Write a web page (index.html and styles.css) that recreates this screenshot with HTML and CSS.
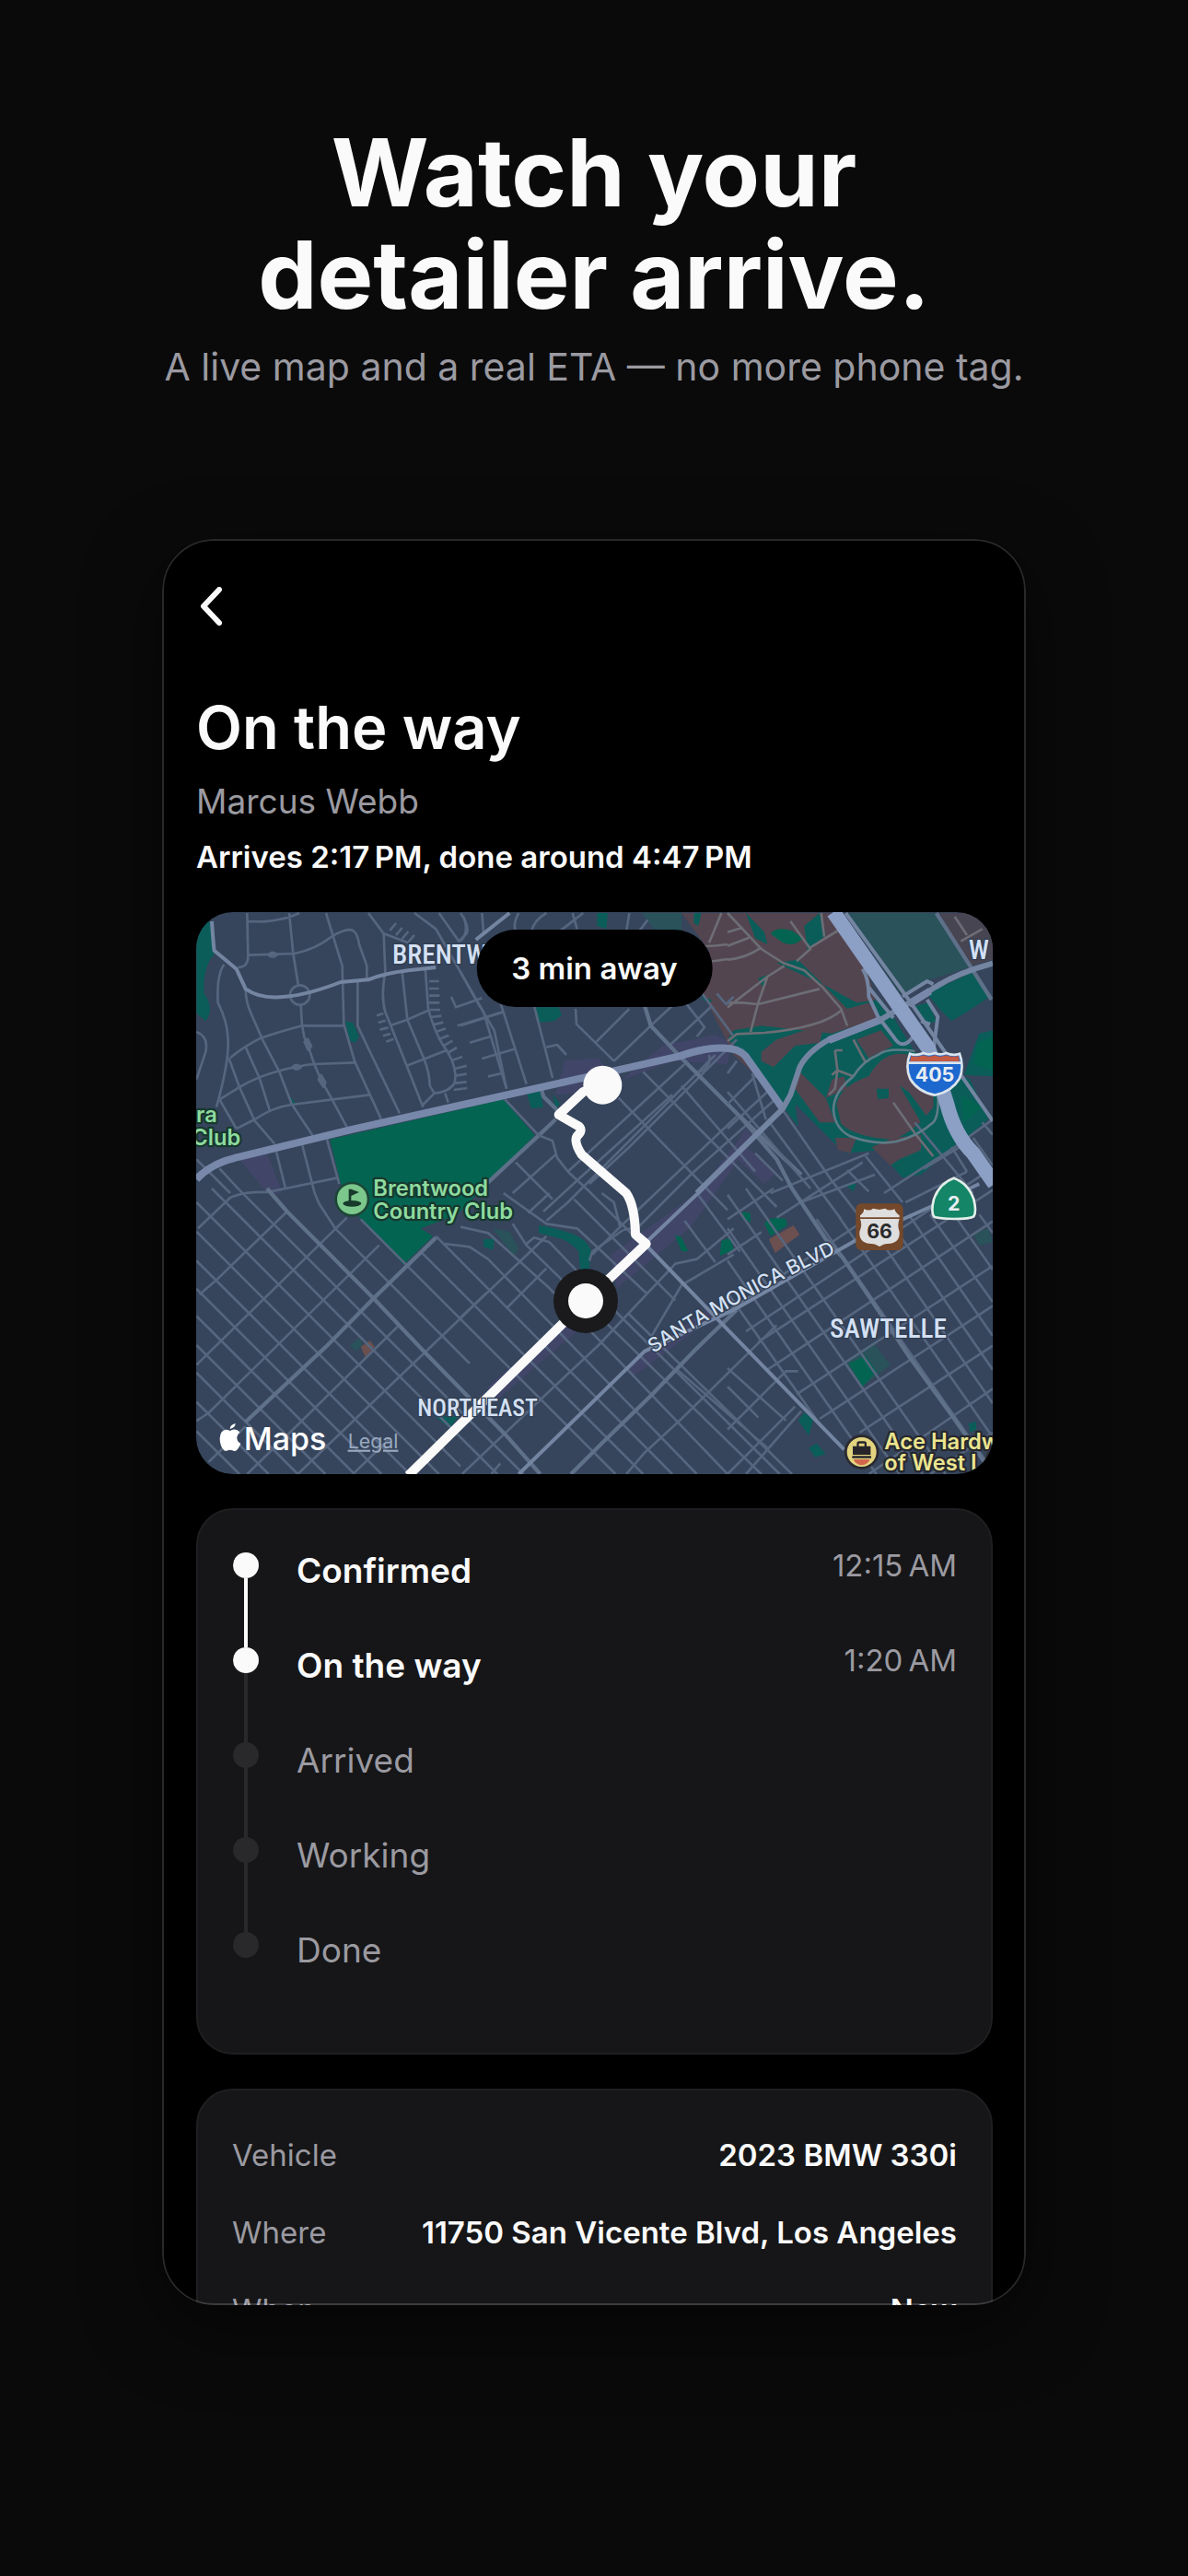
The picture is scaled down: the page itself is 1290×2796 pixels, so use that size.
FILE: index.html
```html
<!DOCTYPE html>
<html lang="en">

<head>
    <meta charset="UTF-8">
    <meta name="viewport" content="width=device-width, initial-scale=1.0">
    <title>Watch your detailer arrive</title>
    <link rel="stylesheet" href="styles.css">
</head>

<body>
    <header class="hero">
        <h1>Watch your<br>detailer arrive.</h1>
        <p>A live map and a real ETA — no more phone tag.</p>
    </header>

    <main class="phone">
        <button class="back" type="button" aria-label="Back">
            <svg viewBox="0 0 24 42" width="24" height="42">
                <path d="M21 3 L4 21 L21 39" />
            </svg>
        </button>

        <h2>On the way</h2>
        <p class="detailer">Marcus Webb</p>
        <p class="eta">Arrives 2:17&#8239;PM, done around 4:47&#8239;PM</p>

        <section class="map">
            <svg class="map-art" viewBox="9 15 2595 1830">
                <!-- Parks and land use -->
                <g class="land">
                    <path class="park" d="M445 755 L1010 625 L1112 742 L960 895 L860 1000 L740 1045 L780 1070 L685 1163 L545 1015 L480 900 Z" />
                    <path class="teal" d="M10 60 L55 45 L70 150 Q30 190 35 280 Q70 330 40 370 L10 345 Z" />
                    <path class="teal" d="M495 370 L520 375 L540 420 L528 440 L510 435 Z M315 615 L335 638 L318 640 Z" />
                    <path class="plum" d="M150 820 L240 800 L290 930 L240 930 Z M1210 500 L1320 490 L1340 520 L1290 600 L1180 610 Z M1530 450 L1700 415 L1750 440 L1740 510 L1560 500 L1400 560 L1430 530 Z" />
                    <path class="plum" d="M1360 1130 L1640 930 L1760 780 L1800 720 L1820 740 L1750 860 L1620 1040 L1380 1240 Z M1740 790 L1790 770 L1900 860 L1860 900 Z M1410 1500 L1700 1290 L1720 1310 L1430 1530 Z M960 1560 L1240 1320 L1260 1370 L970 1620 Z M10 1770 L60 1840 L10 1800 Z" />
                    <path class="teal" d="M1115 325 L1190 325 L1200 350 L1175 370 L1125 375 Z M1085 600 L1130 595 L1140 650 L1100 655 Z M1170 610 L1195 640 L1180 655 Z M1315 18 L1350 18 L1345 70 L1315 60 Z" />
                    <path class="teal" d="M1125 1035 Q1190 1045 1240 1065 Q1280 1080 1295 1115 L1290 1180 L1260 1180 L1255 1120 Q1220 1080 1180 1075 L1125 1060 Z M945 1080 L980 1080 L975 1115 L945 1105 Z" />
                    <path class="forest" d="M975 1045 L1030 1055 L1060 1110 L1045 1135 Z M1460 18 L1590 18 L1590 80 L1500 70 Z" />
                    <path class="park" d="M1568 1065 L1590 1075 L1612 1120 L1590 1120 Z M1720 1085 L1750 1075 L1760 1115 L1715 1135 Z" />
                    <path class="brown" d="M1590 18 L2085 18 L2200 220 L2235 360 L2080 430 L1990 480 L1950 560 L1890 600 L1760 480 L1660 280 L1680 140 Z" />
                    <path class="teal" d="M1800 18 L1860 80 L1870 120 L1830 100 Z M1990 60 L2040 18 L2060 90 L2000 140 Z M1630 18 L1655 18 L1645 60 L1630 50 Z M1650 290 L1690 300 L1680 315 Z M1840 230 L1870 220 L1855 260 Z" />
                    <path class="park" d="M1880 85 Q1900 60 1950 75 L1985 100 Q1960 130 1920 115 Z" />
                    <path class="teal" d="M1900 180 L1970 170 L2050 250 L2130 330 L2200 310 L2235 360 L2080 410 L1850 385 L1760 400 L1740 430 L1790 470 L1930 660 L1970 715 L1960 640 L2080 760 L2130 800 L2230 790 L2310 880 L2370 870 L2590 690 L2530 560 L2350 470 L2270 340 L2240 300 L2160 310 L2070 260 Z" />
                    <path class="brown" d="M1850 470 L1900 430 L1990 400 L2050 400 L2040 440 L1960 450 L1890 520 L1850 500 Z M2160 430 L2240 400 L2280 450 L2200 490 Z" />
                    <path class="brown" d="M1970 530 L2060 620 L2090 700 L2040 700 L1960 590 Z M2080 560 L2120 550 L2130 590 L2060 620 Z" />
                    <path class="brown" d="M2095 640 Q2110 580 2200 550 Q2250 460 2330 480 Q2420 560 2410 650 Q2350 730 2280 755 Q2160 750 2110 705 Z" />
                    <path class="brown" d="M2210 780 L2280 750 L2370 740 L2370 790 L2300 820 L2270 840 Z M2090 750 L2160 750 L2140 800 L2100 790 Z" />
                    <path class="teal" d="M2300 580 L2330 600 L2390 680 L2370 700 Z M2225 590 L2265 590 L2265 620 L2230 625 Z" />
                    <path class="forest" d="M2130 18 L2420 18 L2530 195 L2380 240 L2310 290 L2150 60 Z" />
                    <path class="teal" d="M2390 280 L2540 210 L2595 290 L2520 340 L2470 370 L2430 330 Z M2560 410 L2604 400 V550 L2510 545 Z M2350 320 L2395 310 L2420 370 L2390 380 Z" />
                    <path class="brown soft" d="M2430 18 L2604 18 V170 L2530 190 Z" />
                    <path class="park" d="M2555 440 L2604 420 V530 L2540 510 Z M2500 610 L2570 650 L2510 700 Z" />
                    <path class="park" d="M1860 1030 Q1880 1000 1930 1015 L1935 1035 L1880 1070 Z M1790 990 L1815 995 L1815 1025 L1785 1015 Z" />
                    <path class="clay" d="M1875 1080 L1955 1035 L1975 1065 L1895 1125 Z M545 1430 L575 1410 L590 1430 L560 1465 Z" />
                    <path class="forest" d="M2120 1480 L2215 1415 L2270 1490 L2180 1560 Z M510 1425 L545 1400 L550 1425 L530 1445 Z M2540 1060 L2590 1045 L2604 1090 L2560 1100 Z" />
                    <path class="park" d="M2135 1485 L2190 1460 L2225 1510 L2180 1560 Z" />
                    <path class="teal" d="M1970 1670 L1990 1645 L2020 1665 L2005 1720 Z M2005 1760 L2030 1745 L2060 1780 L2025 1790 Z M2525 1680 L2550 1675 L2550 1700 L2530 1710 Z M790 1660 L865 1655 L835 1695 Z M2120 900 L2160 900 L2150 925 Z" />
                </g>

                <!-- Streets, west side -->
                <g class="street">
                    <path d="M175 18 L178 155 Q180 195 145 195 M175 45 L230 46 Q300 40 345 18 M312 18 L325 150 L342 255 M432 18 L485 190 L490 380 L525 500 L612 690" />
                    <path d="M180 155 L330 150 Q400 135 450 95 Q500 65 520 75 Q535 85 540 120 L565 190 V230" />
                    <circle cx="347" cy="285" r="32" />
                    <path d="M350 318 L354 385 L362 425 L372 445 L393 508 L415 560 L452 625 L500 715 M362 438 l10 -10 l12 24 l-10 12 z M408 560 l8 -14 l14 24 l-6 14 z M322 520 q14 -14 28 0 q-14 14 -28 0 M244 154 q14 -14 28 0 q-14 14 -28 0" />
                    <path d="M120 490 Q160 455 220 425 Q280 405 354 385 H490 M85 625 L150 585 Q210 550 280 532 Q340 515 393 510 L525 505 M140 720 L200 690 Q260 650 320 642 L452 625 L575 610" />
                    <path d="M170 265 Q170 310 190 350 L225 430 L280 535 L320 640 L388 742 M100 185 Q75 220 80 310 Q110 370 112 420 Q120 490 75 650" />
                    <path d="M115 490 L150 585 L200 695 L265 770 M170 455 L215 555 L250 665 M85 625 L140 720 M535 240 V385 L580 480 L672 670" />
                    <path d="M570 18 L620 85 L625 210 Q610 290 625 340 L695 515 L748 650 M680 210 L697 365 L750 490 Q770 540 770 580 L785 605 L745 645" />
                    <path d="M755 195 L765 330 Q790 420 825 465 Q860 520 852 570 Q835 600 785 605 M825 465 L695 515 M640 385 L697 365 L765 335 M820 605 L830 635" />
                    <path d="M768 240h32 M768 264h32 M768 287h34 M768 310h34 M770 333h34 M774 357l34 -4 M780 382l34 -8 M788 406l34 -12 M798 430l34 -14 M812 452l32 -18 M828 474l30 -18 M842 498l34 -12 M852 525l38 -10 M854 548l36 -6 M854 572l36 -4 M848 594l44 -6" />
                    <path d="M620 85 L700 115 M640 75l20 -24 M660 90l20 -24 M680 102l20 -24 M700 112l20 -22 M597 352l22 -7 M602 375l24 -7 M607 398l28 -7 M618 418l24 -7 M628 437l24 -9" />
                    <path d="M720 18 L790 70 L870 210 L920 300 L980 400 L1020 590 M800 18 L865 110 L890 85 Q900 60 870 18 M840 290 L855 325 L940 295 M860 385 L1010 340 M900 440 L968 420 M940 492 L1050 460 M960 550 L1005 540" />
                    <path d="M270 795 L300 915 M355 775 L395 930 L410 965 L462 1045 L900 1485 M435 755 L475 900 M300 915 L470 880 M85 850 L150 920 M10 820 L120 930 M10 405 Q50 420 40 470 L10 560" />
                </g>

                <!-- Streets, south-west grid -->
                <g class="street">
                    <path d="M15 1045 L120 945 Q160 925 240 927 L300 915 M20 1260 L75 1213 L305 990 M10 1490 L40 1460 L500 1010 M10 1672 L48 1647 L605 1100 M50 1805 L170 1690" />
                    <path d="M175 1845 L360 1665 L665 1365 M340 1845 L855 1352 L1150 1070 M520 1845 L640 1728 M870 1335 L955 1255 M1020 1305 L1150 1175" />
                    <path d="M10 960 L870 1820 M10 1055 L800 1845 M10 1150 L705 1845 M10 1242 L613 1845 M10 1330 L525 1845 M10 1425 L430 1845 M10 1515 L340 1845 M10 1610 L245 1845 M10 1705 L150 1845 M10 1800 L55 1845" />
                    <path d="M60 915 L990 1845 M150 920 L1075 1845 M545 1015 L1375 1845 M740 1120 L1465 1845 M790 1070 L1560 1845 M820 1095 L900 1105 L960 1145 L1640 1845" />
                    <path d="M870 1040 L960 1060 L1160 1240 L1740 1845 M1040 1030 L1085 1100 L1850 1845 M1085 1095 L1110 1075 L1160 1090 L1380 1320 L1910 1845" />
                    <path d="M875 1845 L1170 1565 L1320 1425 L1570 1160 L1640 1145 L1760 1045 M970 1845 L1000 1810 M1410 1845 L1470 1775 L1590 1665 L1900 1360 M1740 1845 L1960 1625" />
                    <path d="M1490 1400 L1590 1230 L1760 1130 M1415 1320 L1950 1845 M1570 1500 L1870 1760" />
                </g>
                <g class="street wide">
                    <path d="M240 915 L305 990 L410 1095 L587 1273 L755 1450 L1015 1715 L1130 1845" />
                    <path d="M170 1675 L330 1525 L432 1430 L587 1273 L790 1075 M960 895 L1125 742 L1180 690 M1230 1845 L1330 1745 L1490 1590 L1630 1445 L1770 1310" />
                </g>

                <!-- Streets, middle -->
                <g class="street">
                    <path d="M870 210 L945 340 L1020 590 M1000 310 L1085 575 M1110 320 L1170 555 M1150 455 L1185 447 L1215 480 M1245 330 L1248 380 L1370 500 M1310 440 L1420 330 M1370 500 L1490 385 L1560 320" />
                    <path d="M880 30 Q900 80 870 110 M940 18 L945 80 M1060 18 Q1040 50 1050 80 M1100 80 Q1110 40 1150 18 M1190 80 L1270 18 M1235 18 L1250 70 M1420 18 L1410 80 M1480 40 L1450 80 M870 385 L1010 340" />
                    <path d="M1015 625 L1125 742 L1170 760 L1185 815 L1220 860 L1290 925 L1440 1075 M1050 830 L1170 950 M1040 930 L1180 805 M1220 860 L1600 510 M1140 990 L1260 880 L1560 610" />
                    <path d="M1090 995 L1160 930 M1150 1020 L1220 960 L1700 480 M1290 900 L1420 780 L1770 430 M1390 1040 L1770 680 M1300 1130 L1390 1040 L1370 960 L1330 930 M1400 1050 L1450 1040 L1620 870 L1900 620" />
                    <path d="M1385 620 L1740 985 M1465 535 L1900 975 M1590 580 L1830 860 M1550 450 L1690 320 M1680 480 Q1690 520 1640 540 M1600 1020 L1700 1155 M1640 930 L1780 1120" />
                    <path d="M1010 930 L1150 1030 L1250 1045 L1480 1260 M1290 1150 L1300 1120 L1400 1050 M1240 950 L1570 1280" />
                </g>
                <g class="street wide">
                    <path d="M1470 320 L1490 385 L1580 480 L1780 680 L1980 870 M1130 575 L1140 615 L1185 660" />
                </g>

                <!-- Streets, Sawtelle grid -->
                <g class="street">
                    <path d="M1740 1015 L1890 915 M1740 1130 L1850 1057 M1740 1315 L2230 990 M1800 1380 L2604 848 M1840 1415 L2604 920 M1870 1505 L2604 1022 M1965 1585 L2604 1167" />
                    <path d="M2040 1665 L2604 1297 M2170 1710 L2604 1427 M2200 1845 L2604 1567 M2400 1845 L2604 1710" />
                    <path d="M1740 1255 L2040 1682 M1740 1150 L2225 1845 M1740 1045 L2300 1845 M1740 935 L2375 1845 M1800 915 L2450 1845 M2030 1015 L2604 1835 M2105 1010 L2604 1725" />
                    <path d="M2180 1000 L2604 1615 M2310 1080 L2604 1505 M2330 1000 L2604 1395 M2400 1000 L2604 1285 M2450 960 L2604 1180 M2560 1000 L2604 1060" />
                    <path d="M1740 1560 L1840 1660 M1740 1500 L1930 1670 M1740 1700 L1930 1510 L1970 1510 M1800 1845 L1980 1640" />
                    <path d="M1740 640 L1840 540 M1740 720 L1870 600 M1820 540 L1865 690 M1740 600 L2010 915 M1740 540 L1770 500 M1870 690 L2110 1015 M1920 660 L2080 890 L2180 1020" />
                    <path d="M1880 930 L2200 800 M1900 1010 L2180 830 M1980 960 L2220 870 M2130 855 L2200 925 M2190 810 L2310 960 M2250 930 L2480 780 L2604 690 M2380 850 L2530 760 M2320 960 L2520 860" />
                    <path d="M2350 700 L2540 930 M2470 780 L2520 860 M2570 700 L2604 740 M2540 750 L2604 840 M1830 800 L1920 890" />
                </g>
                <g class="street wide">
                    <path d="M1780 680 L1900 820 L1950 915 L2060 1080 L2115 1140 L2200 1265 L2330 1460 L2475 1660 L2604 1845" />
                    <path d="M2420 18 L2530 190 L2600 300" />
                </g>

                <!-- Cemetery and campus paths -->
                <g class="lane">
                    <path d="M1740 18 L1850 135 L1920 180 L1990 205 L2050 260 L2110 330 L2130 385 M1740 80 L1790 65 M1740 125 L1810 98 M1740 170 Q1800 165 1850 130 M1600 125 Q1680 130 1740 120 M1610 175 Q1680 180 1740 168 M1720 18 L1680 115" />
                    <path d="M1740 325 L1870 225 L1925 190 M1740 310 H1790 L1840 315 L2040 265 M1870 225 L1840 310 L1815 405 M1945 45 L2010 135 L1965 175 M2010 130 L2100 75 M2045 18 L2055 95" />
                    <path d="M1740 435 L1770 412 L1860 408 Q2050 390 2110 335 M2150 430 L2190 505 M2090 465 h25 M2090 465 L2098 530 L2090 590 L2070 610 M2080 545 L2098 530 L2150 550 M2280 635 L2350 735 L2410 810 M2480 30 L2520 90 M2500 110 L2570 70" />
                    <path class="cool" d="M2150 550 Q2180 500 2230 480 Q2260 455 2350 468 M2150 550 Q2085 600 2085 660 Q2090 720 2140 745 Q2220 775 2290 762 Q2360 745 2410 700 Q2430 680 2425 600" />
                </g>
                <path class="street" d="M1650 270 L1760 420 M1580 280 L1665 390 L1640 420 M1705 280 L1735 315 L1760 290" />

                <!-- Main roads -->
                <path class="road" d="M60 45 Q65 120 68 140 L140 200 L170 265 Q220 300 300 290 Q370 285 480 243 L570 235 Q620 215 700 205 L790 195 M920 105 L1030 18" />
                <path class="road" d="M1060 1845 L1470 1445 L1760 1310 L2150 1088 L2400 975 L2560 900 M1470 1095 L1770 1405 L2120 1765 M1470 1095 L1660 915" />
                <path class="avenue" d="M10 885 Q60 830 150 812 L520 722 L1290 550 L1580 485 Q1680 450 1750 460 Q1790 465 1810 500 L1920 655" />
                <path class="road thick" d="M1640 930 L1920 655 L1945 610 L1975 520 Q2000 470 2070 430 L2240 365 L2400 270 Q2480 215 2604 182" />
                <path class="avenue" d="M2070 432 L2240 365 M2330 315 L2400 272" />
                <path class="road" d="M2125 18 L2330 300 L2604 695" />
                <path class="road" d="M2180 200 Q2200 230 2200 290 L2230 355 L2280 420 Q2310 470 2345 420 M2200 260 L2280 360 M2310 290 L2390 240 L2410 250 M2390 300 L2425 355 L2410 470 M2370 370 L2400 380" />
                <path class="freeway" d="M2085 15 L2395 460 Q2430 560 2455 640 Q2480 740 2540 800 L2610 900" />

                <!-- Route -->
                <path class="route" d="M1333 578 L1270 600 L1190 675 L1255 712 Q1270 725 1252 742 Q1236 760 1265 805 L1410 930 Q1438 970 1440 1065 L1475 1095 L1278 1281 L700 1850" />
                <circle class="stop" cx="1333" cy="578" r="63" />
                <circle class="ring" cx="1278" cy="1281" r="105" />
                <circle class="stop" cx="1278" cy="1281" r="57" />

                <!-- Place names -->
                <g class="district">
                    <text x="648" y="183">BRENTWOOD</text>
                    <text x="2525" y="167">W</text>
                    <text x="2073" y="1400">SAWTELLE</text>
                    <text class="small" x="730" y="1656">NORTHEAST</text>
                </g>
                <path id="monica" class="guide" d="M1498 1452 Q1800 1260 2190 1080" />
                <text class="street-name"><textPath href="#monica">SANTA MONICA BLVD</textPath></text>
                <g class="place">
                    <text x="9" y="700">ra</text>
                    <text x="-5" y="773">Club</text>
                    <text x="586" y="940">Brentwood</text>
                    <text x="586" y="1013">Country Club</text>
                </g>
                <g class="place shop">
                    <text x="2251" y="1763">Ace Hardware</text>
                    <text x="2251" y="1833">of West LA</text>
                </g>

                <!-- Golf pin -->
                <circle class="pin-golf" cx="517" cy="950" r="53" />
                <ellipse cx="517" cy="964" rx="30" ry="10" class="pin-ink" />
                <path class="pin-ink" d="M506 917 L514 917 L540 927 L514 939 V964 H506 Z" />

                <!-- Shop pin -->
                <circle class="pin-shop" cx="2177" cy="1773" r="52" />
                <path class="pin-case" d="M2148 1754 H2161 V1746 Q2161 1738 2169 1738 H2185 Q2193 1738 2193 1746 V1754 H2206 V1782 H2148 Z M2168 1754 H2186 V1745 H2168 Z M2146 1786 H2208 V1793 H2146 Z" />
                <path class="pin-red" d="M2150 1797 H2204 Q2196 1815 2177 1816 Q2158 1815 2150 1797 Z" />

                <!-- Route shields -->
                <g>
                    <path class="interstate" d="M2334 476 Q2355 484 2378 474 Q2396 482 2415 474 Q2434 482 2452 474 Q2475 484 2496 476 Q2512 520 2495 558 Q2470 600 2415 611 Q2360 600 2335 558 Q2318 520 2334 476 Z" />
                    <path class="interstate-top" d="M2338 483 Q2358 489 2378 481 Q2396 489 2415 481 Q2434 489 2452 481 Q2472 489 2492 483 L2496 501 H2334 Z" />
                    <path class="interstate-line" d="M2331 506 H2499" />
                    <text class="shield" x="2415" y="567">405</text>

                    <rect class="us-back" x="2158" y="964" width="154" height="152" rx="18" />
                    <path class="us-sign" d="M2172 1003 Q2186 992 2184 982 Q2203 990 2214 980 L2234 984 L2254 980 Q2266 990 2284 982 Q2286 992 2300 1003 V1009 H2172 Z M2172 1014 H2300 Q2292 1034 2300 1056 Q2302 1090 2270 1094 Q2248 1094 2235 1104 Q2222 1094 2200 1094 Q2168 1090 2170 1056 Q2180 1034 2172 1014 Z" />
                    <text class="shield dark" x="2235" y="1077">66</text>

                    <path class="state" d="M2477 881 Q2524 898 2542 950 Q2552 990 2542 1006 Q2530 1014 2477 1014 Q2424 1014 2412 1006 Q2402 990 2412 950 Q2430 898 2477 881 Z" />
                    <text class="shield dark-2" x="2477" y="987">2</text>
                </g>

                <!-- Attribution -->
                <path class="apple" d="M120 1704 Q129 1699 138 1700 Q147 1702 151 1709 Q141 1716 142 1728 Q143 1740 154 1745 Q148 1762 138 1769 Q133 1771 127 1768 Q119 1765 112 1768 Q105 1771 100 1768 Q86 1754 86 1729 Q87 1701 108 1700 Q114 1701 120 1704 Z M119 1698 Q119 1685 137 1680 Q137 1694 119 1698 Z" />
                <text class="maps" x="164" y="1768">Maps</text>
                <a href="#legal"><text class="legal" x="503" y="1760">Legal</text></a>
            </svg>
            <span class="away">3 min away</span>
        </section>

        <ol class="card steps">
            <li class="done"><span class="label">Confirmed</span><time>12:15&#8239;AM</time></li>
            <li class="now"><span class="label">On the way</span><time>1:20&#8239;AM</time></li>
            <li><span class="label">Arrived</span></li>
            <li><span class="label">Working</span></li>
            <li><span class="label">Done</span></li>
        </ol>

        <dl class="card details">
            <div><dt>Vehicle</dt><dd>2023 BMW 330i</dd></div>
            <div><dt>Where</dt><dd>11750 San Vicente Blvd, Los Angeles</dd></div>
            <div><dt>When</dt><dd>Now</dd></div>
        </dl>
    </main>
</body>

</html>
```
FILE: styles.css
```css
* {
    box-sizing: border-box;
}

body {
    margin: 0;
    padding: 132px 176px 0;
    min-height: 100vh;
    background: #0a0a0b;
    color: #fafafa;
    font-family: Inter, sans-serif;
}

h1,
h2,
p,
ol,
dl,
dd {
    margin: 0;
    padding: 0;
}

/* Headline */
.hero {
    text-align: center;
    margin: 0 -100px;
    padding-bottom: 163px;
}

.hero h1 {
    font-size: 102px;
    line-height: 111px;
    font-weight: 700;
}

.hero p {
    margin-top: 20px;
    color: #9b9aa1;
    font-size: 41px;
    line-height: 48px;
}

/* Phone */
.phone {
    position: relative;
    aspect-ratio: 938 / 1917;
    padding: 48px 36px 0 37px;
    border-radius: 56px;
    background: #000;
    overflow: hidden;
    box-shadow: 0 24px 80px rgba(0, 0, 0, 0.5);
}

.phone::after {
    content: "";
    position: absolute;
    inset: 0;
    border: 2px solid rgba(255, 255, 255, 0.16);
    border-radius: 56px;
    pointer-events: none;
}

.back {
    display: block;
    padding: 4px;
    border: 0;
    background: none;
    cursor: pointer;
}

.back svg {
    display: block;
    fill: none;
    stroke: #fafafa;
    stroke-width: 6;
    stroke-linecap: round;
    stroke-linejoin: round;
}

.phone h2 {
    margin-top: 69px;
    font-size: 65px;
    line-height: 76px;
    font-weight: 600;
}

.detailer {
    margin-top: 20px;
    color: #9b9aa1;
    font-size: 37px;
    line-height: 44px;
}

.eta {
    margin-top: 18px;
    font-size: 33px;
    line-height: 40px;
    font-weight: 600;
}

/* Map */
.map {
    position: relative;
    margin-top: 40px;
    border-radius: 40px;
    overflow: hidden;
    background: #36455c;
}

.map-art {
    display: block;
    width: 100%;
}

.away {
    position: absolute;
    top: 19px;
    left: 50%;
    transform: translateX(-50%);
    padding: 22px 38px;
    border-radius: 42px;
    background: #000;
    font-size: 33px;
    line-height: 40px;
    font-weight: 600;
    white-space: nowrap;
}

.park { fill: #046452; }
.teal { fill: #0b5d5a; }
.forest { fill: #29525a; }
.plum { fill: #414669; }
.brown { fill: #53454f; }
.brown.soft { fill: #484553; }
.clay { fill: #6b504f; }

.street,
.lane,
.road,
.avenue,
.freeway,
.route,
.guide {
    fill: none;
    stroke-linejoin: round;
}

.street {
    stroke: #56667f;
    stroke-width: 8;
}

.wide {
    stroke: #5f7089;
    stroke-width: 13;
}

.lane {
    stroke: #6c6d75;
    stroke-width: 8;
}

.cool {
    stroke: #5f7b88;
}

.road {
    stroke: #7485a2;
    stroke-width: 12;
}

.road.thick {
    stroke-width: 18;
}

.avenue {
    stroke: #7888aa;
    stroke-width: 24;
}

.freeway {
    stroke: #8c9fc5;
    stroke-width: 48;
}

.route {
    stroke: #fafafa;
    stroke-width: 30;
}

.stop {
    fill: #fafafa;
}

.ring {
    fill: #1a1a1c;
}

.district,
.street-name {
    fill: #d3e0f3;
    stroke: #303d52;
    stroke-width: 8;
    paint-order: stroke;
    font-family: "Liberation Sans Narrow", "Roboto Condensed", Roboto, sans-serif;
    font-size: 88px;
    font-weight: 500;
}

.small {
    font-size: 78px;
}

.street-name {
    font-family: Inter, sans-serif;
    font-size: 64px;
}

.place {
    fill: #8fdb9f;
    stroke: #17392f;
    stroke-width: 14;
    stroke-linejoin: round;
    paint-order: stroke;
    font-size: 71px;
    font-weight: 600;
}

.shop {
    fill: #ece58f;
    stroke: #26282f;
}

.pin-golf {
    fill: #7cc78b;
    stroke: #1c4636;
    stroke-width: 8;
}

.pin-ink {
    fill: #173a2c;
}

.pin-shop {
    fill: #e3d480;
    stroke: #2a2a2f;
    stroke-width: 8;
}

.pin-case {
    fill: #26262a;
    fill-rule: evenodd;
}

.pin-red {
    fill: #d0674b;
}

.interstate {
    fill: #1d68cf;
    stroke: #dbe4ec;
    stroke-width: 8;
}

.interstate-top {
    fill: #c25a44;
}

.interstate-line {
    stroke: #dbe4ec;
    stroke-width: 8;
}

.us-back {
    fill: #74482a;
}

.us-sign {
    fill: #dedede;
}

.state {
    fill: #148567;
    stroke: #e2efe9;
    stroke-width: 8;
}

.shield {
    fill: #e8edf2;
    font-size: 64px;
    font-weight: 700;
    text-anchor: middle;
}

.shield.dark {
    fill: #2b2b2d;
}

.apple,
.maps {
    fill: #fff;
}

.maps {
    font-size: 102px;
    font-weight: 500;
}

.legal {
    fill: #9aa9bf;
    font-size: 64px;
    text-decoration: underline;
}

/* Cards */
.card {
    margin-top: 37px;
    padding: 0 37px;
    border: 2px solid #1f1f21;
    border-radius: 40px;
    background: #161618;
}

.steps {
    list-style: none;
    padding-top: 46px;
    padding-bottom: 28px;
}

.steps li {
    position: relative;
    display: flex;
    justify-content: space-between;
    height: 103px;
    padding-left: 70px;
    color: #9b9aa1;
}

.steps li::before {
    content: "";
    position: absolute;
    left: 1px;
    top: 0;
    width: 28px;
    height: 28px;
    border-radius: 50%;
    background: #29292b;
}

.steps li:not(:last-child)::after {
    content: "";
    position: absolute;
    left: 13px;
    top: 28px;
    bottom: 0;
    width: 4px;
    background: #29292b;
}

.steps li.done::before,
.steps li.now::before,
.steps li.done:not(:last-child)::after {
    background: #fafafa;
}

.label {
    font-size: 37px;
    line-height: 40px;
}

.done .label,
.now .label {
    color: #fafafa;
    font-weight: 600;
}

.steps time {
    font-size: 33px;
    line-height: 28px;
}

.details {
    padding-top: 50px;
    padding-bottom: 50px;
}

.details div {
    display: flex;
    justify-content: space-between;
    height: 84px;
    font-size: 33px;
    line-height: 40px;
}

.details dt {
    color: #9b9aa1;
}

.details dd {
    font-weight: 600;
}
```
